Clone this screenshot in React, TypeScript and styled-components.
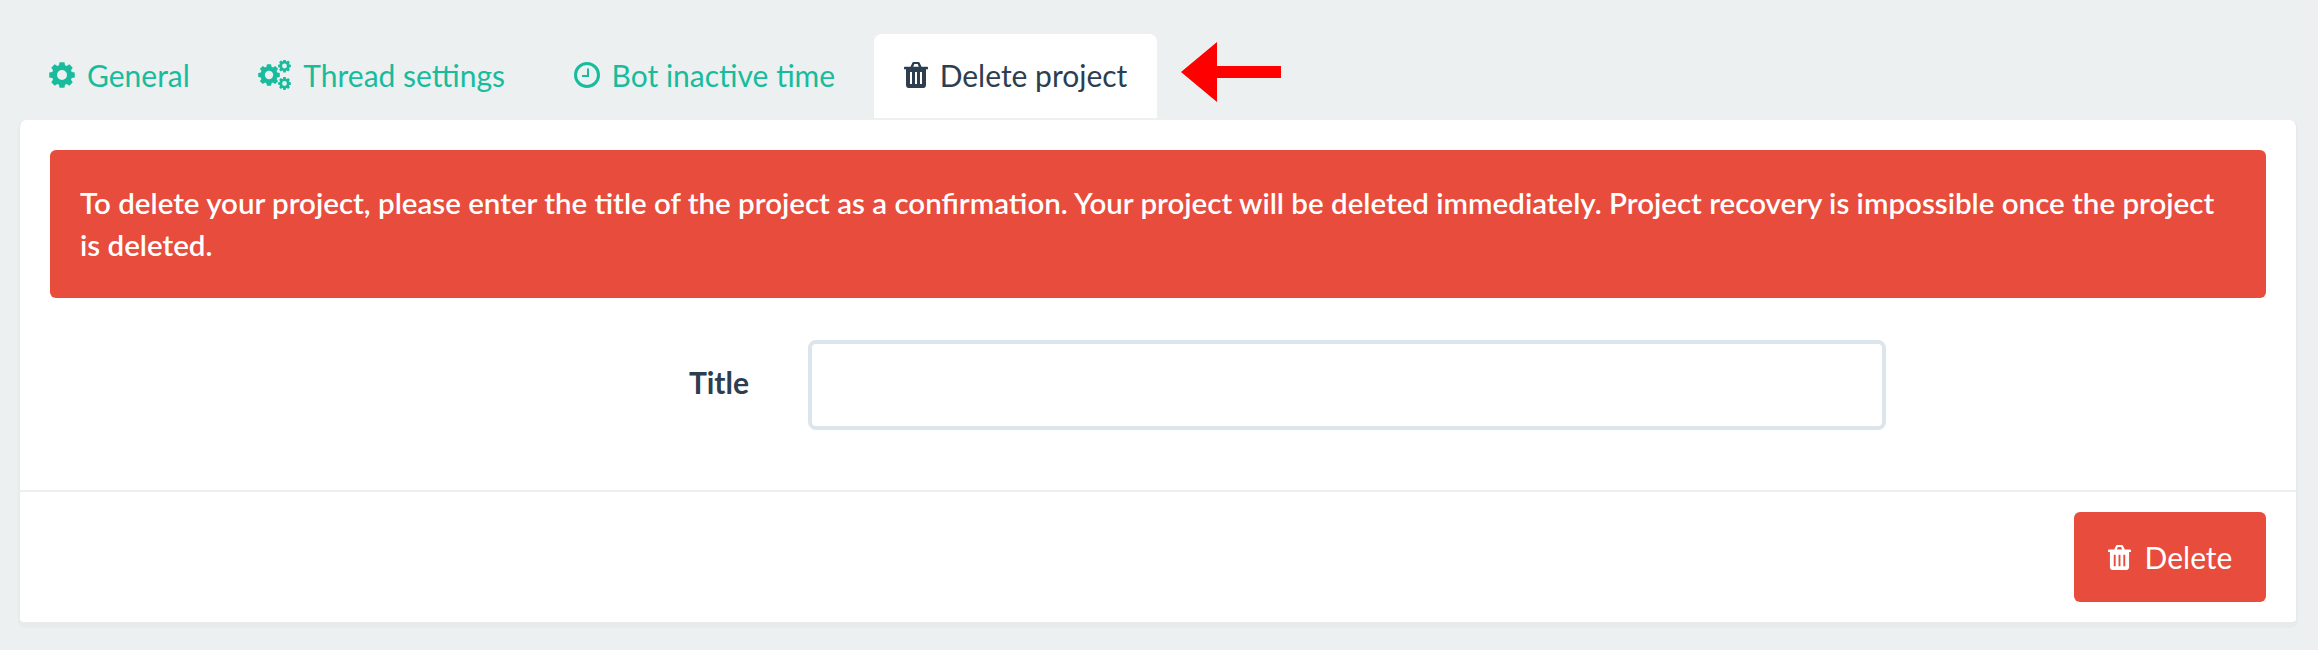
import React from "react";
import styled, { createGlobalStyle } from "styled-components";

const GlobalStyle = createGlobalStyle`
html, body {
    margin: 0;
    background: #ecf0f1;
    font-family: Lato, "Liberation Sans", sans-serif;
}
* {
    box-sizing: border-box;
}
`;

// eight toothed gear with a hole, same shape as the old font awesome cog
const gearPath = (cx: number, cy: number, outer: number, hole: number) => {
    const root = outer * 0.78;
    const points: string[] = [];
    for (let i = 0; i < 8; i++) {
        const a = (i * Math.PI) / 4;
        [
            [root, -0.3],
            [outer, -0.19],
            [outer, 0.19],
            [root, 0.3],
        ].forEach(([r, d]) => {
            points.push(`${(cx + r * Math.sin(a + d)).toFixed(2)} ${(cy - r * Math.cos(a + d)).toFixed(2)}`);
        });
    }
    const ring = `M${cx - hole} ${cy}a${hole} ${hole} 0 1 0 ${hole * 2} 0a${hole} ${hole} 0 1 0 ${-hole * 2} 0Z`;
    return `M${points.join("L")}Z${ring}`;
};

const CogIcon = () => (
    <svg viewBox="0 0 26 26" width="26" height="26" fill="currentColor">
        <path fillRule="evenodd" d={gearPath(13, 13, 13, 5)} />
    </svg>
);

const CogsIcon = () => (
    <svg viewBox="0 0 33 30" width="33" height="30" fill="currentColor">
        <path fillRule="evenodd" d={gearPath(11, 15, 11, 4.2)} />
        <path fillRule="evenodd" d={gearPath(26.5, 6, 6.5, 2.4)} />
        <path fillRule="evenodd" d={gearPath(26.5, 23.5, 6.5, 2.4)} />
    </svg>
);

const ClockIcon = () => (
    <svg viewBox="0 0 26 26" width="26" height="26" fill="none" stroke="currentColor">
        <circle cx="13" cy="13" r="11.5" strokeWidth="3" />
        <path d="M14 6.500V14H8" strokeWidth="2" />
    </svg>
);

const TrashIcon = ({ width = 24, height = 26 }: { width?: number; height?: number }) => (
    <svg viewBox="0 0 24 26" width={width} height={height} fill="currentColor">
        <path
            fillRule="evenodd"
            d="M6.500 4.700 8 1.400C8.400 .5 9 0 10 0H14C15 0 15.600 .5 16 1.400L17.500 4.700H23C23.600 4.700 24 5.100 24 5.700V7.300H22V23C22 24.700 20.800 26 19.500 26H4.500C3.200 26 2 24.700 2 23V7.300H0V5.700C0 5.100 .4 4.700 1 4.700ZM9.200 4.700H14.800L13.800 2.300C13.700 2.100 13.500 2 13.300 2H10.700C10.500 2 10.300 2.100 10.200 2.300ZM6 10V22H8V10ZM11 10V22H13V10ZM16 10V22H18V10Z"
        />
    </svg>
);

const tabs = [
    { title: "General", icon: <CogIcon /> },
    { title: "Thread settings", icon: <CogsIcon /> },
    { title: "Bot inactive time", icon: <ClockIcon /> },
];

const App = () => {
    return (
        <Page>
            <GlobalStyle />
            <TabRow>
                <TabGroup>
                    {tabs.map((tab) => (
                        <Tab key={tab.title}>
                            {tab.icon}
                            {tab.title}
                        </Tab>
                    ))}
                    <Tab $active>
                        <TrashIcon />
                        Delete project
                    </Tab>
                </TabGroup>
                <Arrow viewBox="0 0 100 60" width="100" height="60">
                    <path d="M0 30 36 0V24H100V36H36V60Z" fill="#ff0000" />
                </Arrow>
            </TabRow>
            <Panel>
                <PanelBody>
                    <Alert>
                        To delete your project, please enter the title of the project as a confirmation. Your project
                        will be deleted immediately. Project recovery is impossible once the project is deleted.
                    </Alert>
                    <FormRow>
                        <Label>Title</Label>
                        <Input type="text" />
                    </FormRow>
                </PanelBody>
                <PanelFooter>
                    <DeleteButton>
                        <TrashIcon width={23} height={25} />
                        Delete
                    </DeleteButton>
                </PanelFooter>
            </Panel>
        </Page>
    );
};

export default App;

const Page = styled.div`
    width: 2318px;
    height: 650px;
    padding: 34px 20px 0 18px;
    overflow: hidden;
`;

const TabRow = styled.div`
    display: flex;
    align-items: flex-start;
    height: 86px;
`;

const TabGroup = styled.div`
    display: flex;
    gap: 8.5px;
    margin-left: 1px;
`;

const Tab = styled.a<{ $active?: boolean }>`
    display: flex;
    align-items: center;
    gap: 12px;
    height: 84px;
    padding: 0 30px 2px;
    border-radius: 8px 8px 0 0;
    font-size: 30px;
    color: ${(p) => (p.$active ? "#2c3e50" : "#18bc9c")};
    background: ${(p) => (p.$active ? "#ffffff" : "transparent")};
`;

const Arrow = styled.svg`
    margin: 8px 0 0 24px;
`;

const Panel = styled.div`
    background: #ffffff;
    border-style: solid;
    border-color: #e7ebec;
    border-width: 0 2px 6px;
    border-radius: 8px;
`;

const PanelBody = styled.div`
    height: 372px;
    padding: 30px 30px 0;
    border-bottom: 2px solid #ecf0f1;
`;

const Alert = styled.div`
    height: 148px;
    padding: 32px 30px;
    border-radius: 6px;
    background: #e74c3c;
    color: #ffffff;
    font-size: 29.5px;
    font-weight: 600;
    line-height: 42px;
`;

const FormRow = styled.div`
    display: flex;
    align-items: center;
    margin-top: 42px;
`;

const Label = styled.label`
    width: 699px;
    padding-bottom: 7px;
    text-align: right;
    font-size: 30px;
    font-weight: 700;
    color: #2c3e50;
`;

const Input = styled.input`
    width: 1078px;
    height: 90px;
    margin-left: 59px;
    border: 4px solid #dce4ec;
    border-radius: 8px;
    background: #ffffff;
    outline: none;
`;

const PanelFooter = styled.div`
    display: flex;
    justify-content: flex-end;
    padding: 20px 30px;
`;

const DeleteButton = styled.button`
    display: flex;
    align-items: center;
    justify-content: center;
    gap: 14px;
    width: 192px;
    height: 90px;
    border: none;
    border-radius: 6px;
    background: #e74c3c;
    color: #ffffff;
    font-family: inherit;
    font-size: 30px;
`;
